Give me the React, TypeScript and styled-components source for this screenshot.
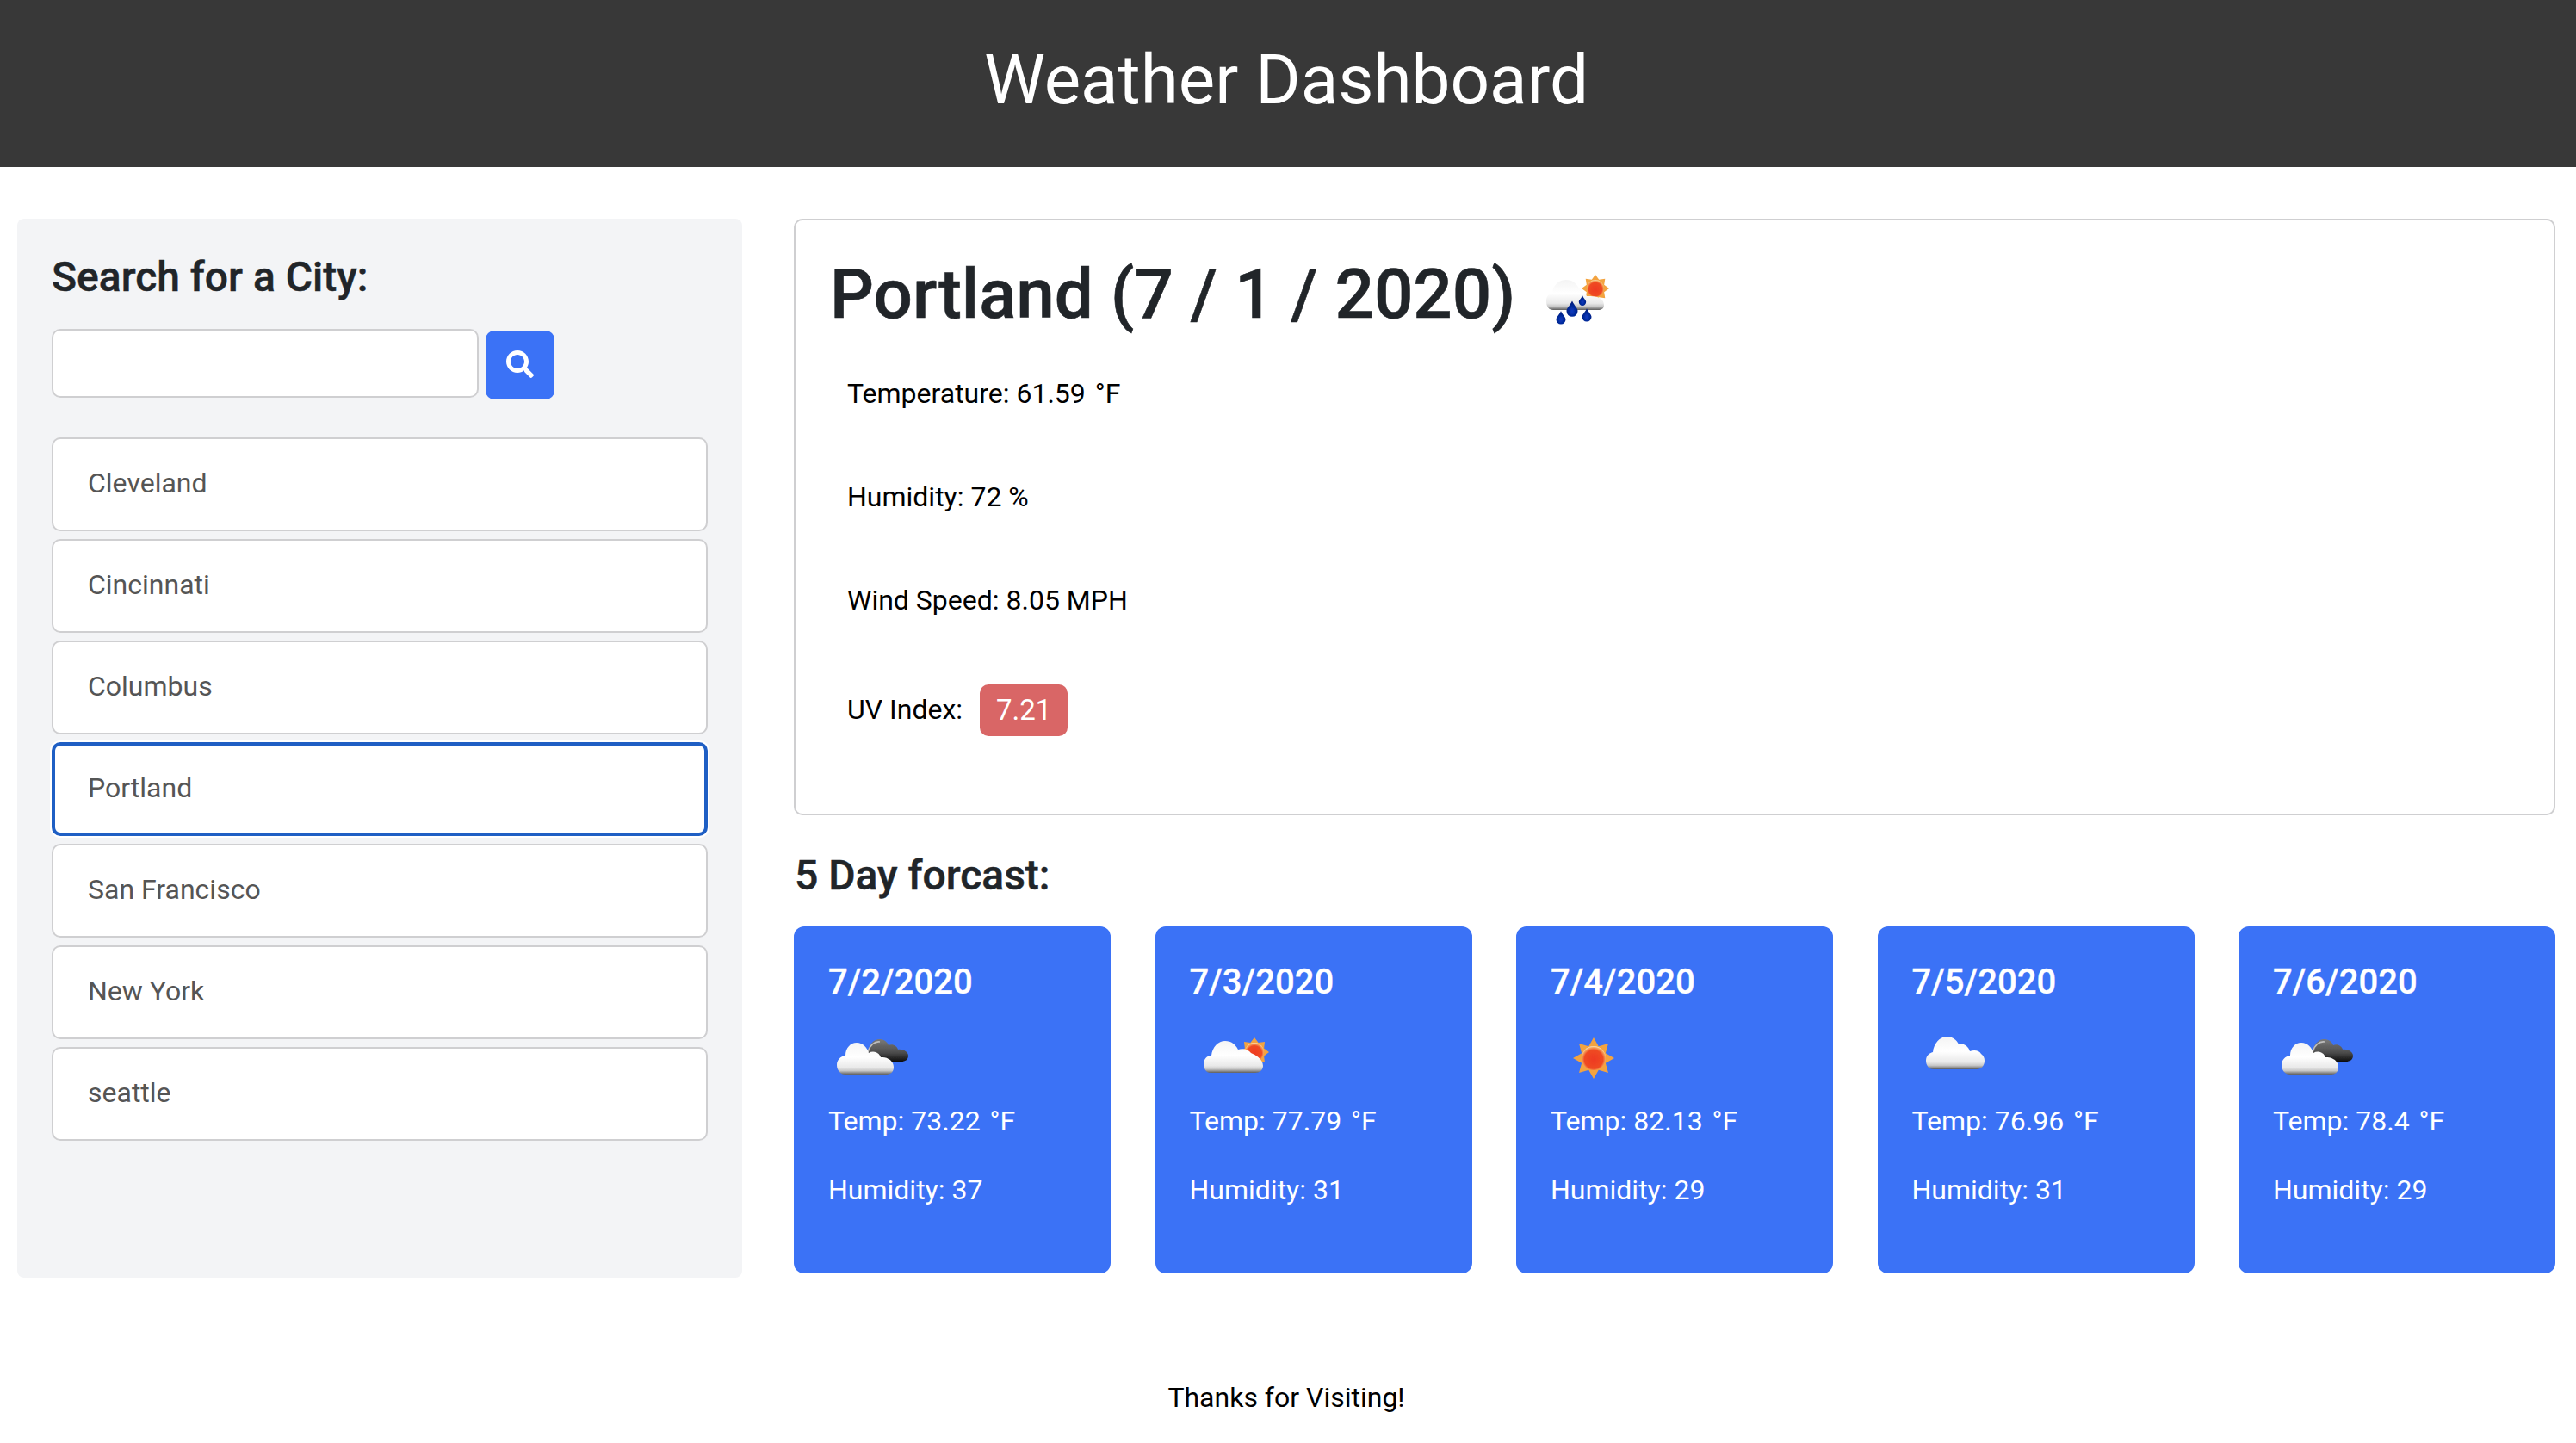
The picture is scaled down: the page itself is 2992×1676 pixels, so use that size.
import React from "react";
import styled, { createGlobalStyle } from "styled-components";
import { FaSearch } from "react-icons/fa";

const Global = createGlobalStyle`
  html, body { margin: 0; padding: 0; background: #fff; }
  body { font-family: Roboto, "Liberation Sans", sans-serif; color: #212529; font-size: 32px; }
  * { box-sizing: border-box; }
`;

const Page = styled.div`
  width: 2992px;
  height: 1676px;
  display: flex;
  flex-direction: column;
`;
const Header = styled.header`
  height: 194px;
  padding: 0 4px 8px 0;
  background: #383838;
  color: #fff;
  display: flex;
  align-items: center;
  justify-content: center;
`;
const Title = styled.h1`
  margin: 0;
  font-size: 80px;
  font-weight: 400;
  line-height: 1;
`;
const Main = styled.main`
  display: grid;
  grid-template-columns: 842px 2046px;
  column-gap: 60px;
  padding: 60px 24px 0 20px;
`;
const Sidebar = styled.aside`
  height: 1230px;
  background: #f3f4f6;
  border-radius: 8px;
  padding: 40px;
`;
const SideHeading = styled.h3`
  margin: 0 0 32px;
  font-size: 48px;
  line-height: 56px;
  font-weight: 500;
  -webkit-text-stroke: 0.5px currentColor;
`;
const SearchRow = styled.form`
  display: flex;
  align-items: flex-start;
  gap: 8px;
  margin-bottom: 44px;
`;
const SearchInput = styled.input`
  width: 496px;
  height: 80px;
  background: #fff;
  border: 2px solid #cfcfd1;
  border-radius: 10px;
  outline: none;
`;
const SearchButton = styled.button`
  width: 80px;
  height: 80px;
  margin-top: 2px;
  border: none;
  border-radius: 10px;
  background: #3b72f6;
  color: #fff;
  display: flex;
  align-items: center;
  justify-content: center;
  font-size: 32px;
  padding: 0 0 2px;
`;
const CityList = styled.ul`
  list-style: none;
  margin: 0;
  padding: 0;
  display: flex;
  flex-direction: column;
  gap: 9px;
`;
const CityItem = styled.li<{ $active?: boolean }>`
  height: 109px;
  padding: ${(p) => (p.$active ? "0 38px 3px" : "0 40px 3px")};
  display: flex;
  align-items: center;
  background: #fff;
  color: #555;
  font-size: 32px;
  border: ${(p) => (p.$active ? "4px solid #1f5fc4" : "2px solid #cfcfd1")};
  box-shadow: ${(p) => (p.$active ? "0 0 0 2px #fff" : "none")};
  border-radius: 10px;
`;
const Content = styled.section`
  display: flex;
  flex-direction: column;
`;
const CurrentCard = styled.div`
  height: 693px;
  border: 2px solid #cfcfd1;
  border-radius: 10px;
  padding: 32px 40px 0;
`;
const CityTitle = styled.div`
  display: flex;
  align-items: flex-start;
  height: 100px;
`;
const CityName = styled.h2`
  margin: 0;
  font-size: 80px;
  line-height: 108px;
  font-weight: 500;
  -webkit-text-stroke: 0.6px currentColor;
`;
const Details = styled.div`
  margin-top: 47px;
  padding-left: 20px;
  display: flex;
  flex-direction: column;
`;
const Detail = styled.div`
  height: 120px;
  line-height: 44px;
  color: #000;
  font-size: 32px;
`;
const Degree = styled.span`
  margin-left: 3px;
`;
const UvRow = styled.div`
  display: flex;
  align-items: center;
  gap: 20px;
  color: #000;
  font-size: 32px;
  margin-top: -2px;
`;
const UvBadge = styled.span`
  display: flex;
  align-items: center;
  justify-content: center;
  width: 102px;
  height: 60px;
  margin-top: 2px;
  padding-bottom: 2px;
  border-radius: 10px;
  background: #d96666;
  color: #fff;
  font-size: 33px;
`;
const ForecastHeading = styled.h4`
  margin: 40px 0 29px 1px;
  font-size: 48px;
  line-height: 60px;
  font-weight: 500;
  -webkit-text-stroke: 0.5px currentColor;
`;
const ForecastRow = styled.div`
  display: flex;
  justify-content: space-between;
`;
const ForecastCard = styled.div`
  width: 368px;
  height: 403px;
  background: #3b72f6;
  color: #fff;
  border-radius: 12px;
  padding: 35px 40px 0;
`;
const ForecastDate = styled.div`
  font-size: 40px;
  font-weight: 500;
  line-height: 60px;
  -webkit-text-stroke: 0.3px currentColor;
`;
const ForecastLine = styled.div`
  font-size: 32px;
  line-height: 44px;
  height: 80px;
`;
const IconSvg = styled.svg`
  display: block;
  width: 100px;
  height: 100px;
  flex: none;
`;
const ForecastIcon = styled(IconSvg)`
  margin: 5px 0 4px;
`;
const TitleIcon = styled(IconSvg)`
  margin: 4px 0 0 20px;
`;
const Footer = styled.footer`
  flex: 1;
  display: flex;
  align-items: center;
  justify-content: center;
  color: #000;
  padding: 86px 4px 0 0;
  font-size: 32px;
`;
const Defs = styled.svg`
  display: block;
  width: 0;
  height: 0;
`;

const Sprites = () => (
  <Defs aria-hidden="true">
    <defs>
      <linearGradient id="whiteCloud" x1="0" y1="0" x2="0" y2="1">
        <stop offset="0" stopColor="#f4f4f4" />
        <stop offset="0.45" stopColor="#ffffff" />
        <stop offset="0.78" stopColor="#e9e9e9" />
        <stop offset="0.88" stopColor="#c8c8c8" />
        <stop offset="1" stopColor="#5d5d5d" />
      </linearGradient>
      <linearGradient id="darkCloud" x1="0" y1="0" x2="0" y2="1">
        <stop offset="0" stopColor="#7a7a7a" />
        <stop offset="0.6" stopColor="#4c4c4c" />
        <stop offset="1" stopColor="#0e0e0e" />
      </linearGradient>
      <radialGradient id="sunDisc" cx="0.5" cy="0.55" r="0.55">
        <stop offset="0" stopColor="#ee3a20" />
        <stop offset="0.7" stopColor="#ef4a22" />
        <stop offset="0.9" stopColor="#f6a860" />
        <stop offset="1" stopColor="#fde7c8" />
      </radialGradient>
      <radialGradient id="drop" cx="0.5" cy="0.65" r="0.6">
        <stop offset="0" stopColor="#0a3bc0" />
        <stop offset="1" stopColor="#001a78" />
      </radialGradient>
      <filter id="soft" x="-20%" y="-20%" width="140%" height="140%">
        <feGaussianBlur stdDeviation="0.7" />
      </filter>
    </defs>
  </Defs>
);

const CLOUD_SMALL =
  "M25 66 C19 66 16 61 16 56 C16 50 20 47 24 46 C25 36 32 28 40 28 C47 28 52 32 54 37 C60 35 65 39 67 45 C72 43 78 44 80 48 C83 50 84 53 84 56 C84 62 80 66 75 66 Z";
const CLOUD_BIG =
  "M20 72 C14 72 10 67 10 61 C10 55 14 51 20 50 C20 41 26 35 33 35 C40 35 45 40 47 47 C52 44 59 46 61 52 C64 52 67 52 70 54 C74 56 76 60 76 64 C76 69 72 72 68 72 Z";
const CLOUD_WIDE =
  "M24 70 C19 70 16 65 16 60 C16 54 20 50 25 50 C26 40 33 33 41 33 C48 33 53 37 56 43 C62 41 68 43 71 47 C76 49 85 54 85 62 C85 67 81 70 76 70 Z";
const CLOUD_RAIN =
  "M24 68 C19 68 16 64 16 58 C16 52 19 49 23 48 C24 39 31 33 39 33 C46 33 51 37 54 43 C58 44 61 47 63 52 C68 52 78 52 80 56 C83 58 83 62 83 63 C83 66 80 68 76 68 Z";

const Sun = ({ cx, cy, r, ray }: { cx: number; cy: number; r: number; ray: number }) => {
  const points = Array.from({ length: 8 }, (_, i) => {
    const a = (i * Math.PI) / 4 - Math.PI / 2;
    const b = Math.PI / 8;
    const base = r + 1;
    return [
      `${cx + base * Math.cos(a - b)},${cy + base * Math.sin(a - b)}`,
      `${cx + ray * Math.cos(a)},${cy + ray * Math.sin(a)}`,
      `${cx + base * Math.cos(a + b)},${cy + base * Math.sin(a + b)}`,
    ].join(" ");
  }).join(" ");
  return (
    <g>
      <polygon points={points} fill="#f3a33f" />
      <circle cx={cx} cy={cy} r={r} fill="url(#sunDisc)" />
    </g>
  );
};

const Drop = ({ x, y, s }: { x: number; y: number; s: number }) => (
  <path
    d={`M${x} ${y - s * 1.6} C${x + s * 0.5} ${y - s * 0.6} ${x + s} ${y - s * 0.3} ${x + s} ${y + s * 0.2} A${s} ${s} 0 0 1 ${x - s} ${y + s * 0.2} C${x - s} ${y - s * 0.3} ${x - s * 0.5} ${y - s * 0.6} ${x} ${y - s * 1.6} Z`}
    fill="url(#drop)"
  />
);

type Kind = "broken" | "partly" | "clear" | "cloud" | "rain";

const Art = ({ kind }: { kind: Kind }) => {
  if (kind === "broken")
    return (
      <g filter="url(#soft)">
        <path
          d="M46 47 C47 36 54 30 61 31 C66 32 69 35 70 38 C75 36 80 39 81 43 C87 42 93 46 93 50 C93 55 89 57 85 57 L55 57 Z"
          fill="url(#darkCloud)"
        />
        <path d="M46 46 C48 38 54 33 60 34" fill="none" stroke="#bdbdbd" strokeWidth="1.6" />
        <path d={CLOUD_BIG} fill="url(#whiteCloud)" />
      </g>
    );
  if (kind === "partly")
    return (
      <g filter="url(#soft)">
        <Sun cx={75} cy={46} r={11} ray={17} />
        <path d={CLOUD_WIDE} fill="url(#whiteCloud)" />
      </g>
    );
  if (kind === "clear")
    return (
      <g filter="url(#soft)">
        <Sun cx={50} cy={53} r={14} ray={24} />
      </g>
    );
  if (kind === "cloud")
    return (
      <g filter="url(#soft)">
        <path d={CLOUD_SMALL} fill="url(#whiteCloud)" />
      </g>
    );
  return (
    <g filter="url(#soft)">
      <Sun cx={73} cy={43} r={10} ray={16} />
      <path d={CLOUD_RAIN} fill="url(#whiteCloud)" />
      <Drop x={33} y={78} s={5.5} />
      <Drop x={46} y={68} s={6.5} />
      <Drop x={58} y={58} s={4.2} />
      <Drop x={63} y={75} s={5.5} />
    </g>
  );
};

const cities = ["Cleveland", "Cincinnati", "Columbus", "Portland", "San Francisco", "New York", "seattle"];
const days: { date: string; kind: Kind; temp: string; hum: string }[] = [
  { date: "7/2/2020", kind: "broken", temp: "73.22", hum: "37" },
  { date: "7/3/2020", kind: "partly", temp: "77.79", hum: "31" },
  { date: "7/4/2020", kind: "clear", temp: "82.13", hum: "29" },
  { date: "7/5/2020", kind: "cloud", temp: "76.96", hum: "31" },
  { date: "7/6/2020", kind: "broken", temp: "78.4", hum: "29" },
];

export default function App() {
  return (
    <Page>
      <Global />
      <Sprites />
      <Header>
        <Title>Weather Dashboard</Title>
      </Header>
      <Main>
        <Sidebar>
          <SideHeading>Search for a City:</SideHeading>
          <SearchRow onSubmit={(e) => e.preventDefault()}>
            <SearchInput aria-label="City" />
            <SearchButton aria-label="Search">
              <FaSearch />
            </SearchButton>
          </SearchRow>
          <CityList>
            {cities.map((c) => (
              <CityItem key={c} $active={c === "Portland"}>
                {c}
              </CityItem>
            ))}
          </CityList>
        </Sidebar>
        <Content>
          <CurrentCard>
            <CityTitle>
              <CityName>Portland (7 / 1 / 2020)</CityName>
              <TitleIcon viewBox="0 0 100 100">
                <Art kind="rain" />
              </TitleIcon>
            </CityTitle>
            <Details>
              <Detail>
                Temperature: 61.59 <Degree>°</Degree>F
              </Detail>
              <Detail>Humidity: 72 %</Detail>
              <Detail>Wind Speed: 8.05 MPH</Detail>
              <UvRow>
                UV Index:
                <UvBadge>7.21</UvBadge>
              </UvRow>
            </Details>
          </CurrentCard>
          <ForecastHeading>5 Day forcast:</ForecastHeading>
          <ForecastRow>
            {days.map((d) => (
              <ForecastCard key={d.date}>
                <ForecastDate>{d.date}</ForecastDate>
                <ForecastIcon viewBox="0 0 100 100">
                  <Art kind={d.kind} />
                </ForecastIcon>
                <ForecastLine>
                  Temp: {d.temp} <Degree>°</Degree>F
                </ForecastLine>
                <ForecastLine>Humidity: {d.hum}</ForecastLine>
              </ForecastCard>
            ))}
          </ForecastRow>
        </Content>
      </Main>
      <Footer>Thanks for Visiting!</Footer>
    </Page>
  );
}
